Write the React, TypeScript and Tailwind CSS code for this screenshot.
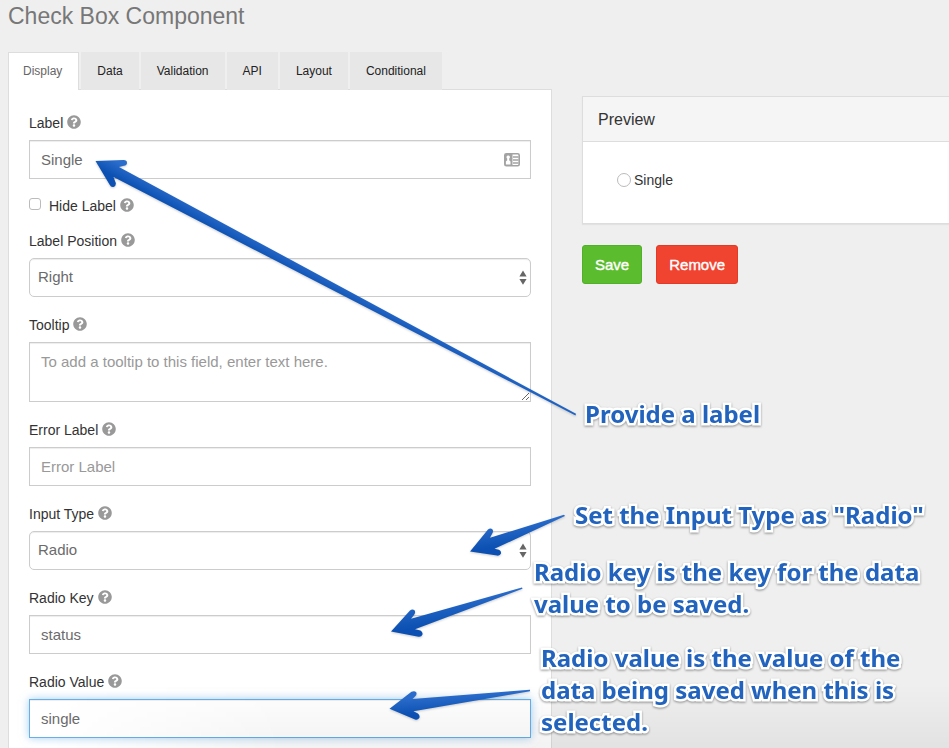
import type { ReactNode } from 'react';
import { FaQuestionCircle } from 'react-icons/fa';

const tabs = ['Display', 'Data', 'Validation', 'API', 'Layout', 'Conditional'];

const control =
  'block w-full border border-[#ccc] bg-white text-[15px] text-[#6b6b6b] shadow-[inset_0_1px_1px_rgba(0,0,0,0.075)] outline-none placeholder:text-[#999]';

function Help() {
  return <FaQuestionCircle className="mb-0.5 size-3.5 text-[#999]" aria-hidden="true" />;
}

function Field({ id, label, children }: { id: string; label: string; children: ReactNode }) {
  return (
    <div className="mb-4">
      <label htmlFor={id} className="mb-[5px] flex items-center gap-1 text-sm leading-6 text-[#333]">
        {label}
        <Help />
      </label>
      {children}
    </div>
  );
}

function SelectBox({ id, options }: { id: string; options: string[] }) {
  return (
    <div className="relative">
      <select id={id} className={`${control} h-[39px] appearance-none rounded-[5px] pr-6 pl-2`}>
        {options.map((o) => (
          <option key={o}>{o}</option>
        ))}
      </select>
      <svg className="pointer-events-none absolute top-3 right-1 h-4 w-2" viewBox="0 0 8 16" fill="#666" aria-hidden="true">
        <path d="M4 .5 7.600 6.400H.4zM4 14.800.4 9h7.200z" />
      </svg>
    </div>
  );
}

function Note({ className, children }: { className: string; children: ReactNode }) {
  return (
    <p
      className={`absolute font-['Noto_Sans','Open_Sans',sans-serif] text-2xl leading-[32px] font-bold whitespace-nowrap text-[#2163bd] drop-shadow-[0_1px_1px_rgba(0,0,0,0.4)] [-webkit-text-stroke:5px_white] [paint-order:stroke_fill] ${className}`}
    >
      {children}
    </p>
  );
}

function Arrows() {
  return (
    <svg
      className="absolute top-0 left-0 h-[748px] w-[949px] drop-shadow-[0_1px_1px_rgba(0,0,0,0.2)]"
      viewBox="0 0 949 748"
      aria-hidden="true"
    >
      <defs>
        <linearGradient id="long" gradientUnits="userSpaceOnUse" x1="340" y1="282" x2="333" y2="295">
          <stop offset="0" stopColor="#2a6ccb" />
          <stop offset="1" stopColor="#0b50b2" />
        </linearGradient>
        <linearGradient id="short" x1="0.35" y1="0.2" x2="0.5" y2="0.75">
          <stop offset="0" stopColor="#2a6ccb" />
          <stop offset="1" stopColor="#0b50b2" />
        </linearGradient>
      </defs>
      <path
        fill="url(#long)"
        d="M95.5 161 123.500 160Q127 160 127 162.800 127 165.500 124 165.800L119 167 576 413.800 575.500 415.500 113.500 177 115.800 183Q116.200 186 113.500 187 111 187.500 109.500 184.500Z"
      />
      <path
        fill="url(#short)"
        d="M470 551.500 488 529.500Q490.500 527.500 492.500 529.500 493.800 531.500 492 534L490 537.800 564 514.800 565 516 494.500 548.800 499 549.800Q501.500 551 501 553.500 500 556 497 555.600Z"
      />
      <path
        fill="url(#short)"
        d="M391 631.500 410 610.500Q412.500 608.500 414.500 610.300 416 612.500 414 615L411 618.800 522 587.500 522.500 588.700 415 629.200 420.500 630.500Q423 632 422.500 634.500 421.500 637.200 418.500 636.800Z"
      />
      <path
        fill="url(#short)"
        d="M389.500 708.800 411.500 691.800Q414.500 690.300 416.200 692.300 417.300 694.500 415 696.500L412.500 699 530 689.800 530 691.300 413.500 711.200 418 713.500Q420.300 715.500 419.300 718 417.500 720.500 415 719.500Z"
      />
    </svg>
  );
}

export default function App() {
  return (
    <main className="relative h-screen overflow-hidden bg-[#efefef] pl-2 font-['Liberation_Sans',Arial,sans-serif]">
      <h1 className="mb-5 text-[23px] leading-8 text-[#777]">Check Box Component</h1>

      <div className="grid grid-cols-[544fr_367fr] gap-[30px]">
        <section>
          <div role="tablist" className="relative -mb-px flex items-start gap-0.5">
            {tabs.map((tab, i) => (
              <button
                key={tab}
                role="tab"
                aria-selected={i === 0}
                className={`h-[38px] text-xs ${
                  i === 0
                    ? 'border border-b-0 border-[#ddd] bg-white pr-4 pb-0.5 pl-3.5 text-[#666]'
                    : 'bg-[#e7e7e7] px-4 text-[#222]'
                }`}
              >
                {tab}
              </button>
            ))}
          </div>

          <form className="border border-[#ddd] bg-white px-5 pt-[21px] pb-10">
            <Field id="label" label="Label">
              <div className="relative">
                <input id="label" defaultValue="Single" className={`${control} h-[39px] px-[11px]`} />
                <svg className="absolute top-3 right-[11px] h-4 w-4" viewBox="0 0 16 16" aria-hidden="true">
                  <rect x="0.800" y="1.800" width="14.400" height="12" rx="1.500" fill="#fff" stroke="#a3a3a3" strokeWidth="1.600" />
                  <rect x="7" y="2" width="1.500" height="12" fill="#a3a3a3" />
                  <path d="M9 5h5.500M9 8h5.500M9 11h5.500" stroke="#a3a3a3" strokeWidth="1.300" />
                  <path d="M1 2h6v12H1z" fill="#a3a3a3" />
                  <path d="M4.200 3.500a1.600 1.600 0 0 1 1 2.900v1.800l1.300 1.300v3H1.900v-3l1.300-1.300V6.400a1.600 1.600 0 0 1 1-2.900z" fill="#fff" />
                </svg>
              </div>
            </Field>

            <div className="mb-3 flex items-center gap-2 text-sm leading-[22px] text-[#333]">
              <input
                id="hide"
                type="checkbox"
                className="mb-1 size-3 appearance-none rounded-[3px] border border-[#bbb] bg-white"
              />
              <label htmlFor="hide" className="flex items-center gap-1">
                Hide Label
                <Help />
              </label>
            </div>

            <Field id="position" label="Label Position">
              <SelectBox id="position" options={['Right', 'Left', 'Top', 'Bottom']} />
            </Field>
            <Field id="tooltip" label="Tooltip">
              <textarea
                id="tooltip"
                placeholder="To add a tooltip to this field, enter text here."
                className={`${control} h-[60px] px-[11px] py-2`}
              />
            </Field>
            <Field id="error" label="Error Label">
              <input id="error" placeholder="Error Label" className={`${control} h-[39px] px-[11px]`} />
            </Field>
            <Field id="type" label="Input Type">
              <SelectBox id="type" options={['Radio', 'Checkbox']} />
            </Field>
            <Field id="key" label="Radio Key">
              <input id="key" defaultValue="status" className={`${control} h-[39px] px-[11px]`} />
            </Field>
            <Field id="value" label="Radio Value">
              <input
                id="value"
                defaultValue="single"
                className="block h-[39px] w-full border border-[#66afe9] bg-white px-[11px] text-[15px] text-[#6b6b6b] shadow-[inset_0_1px_1px_rgba(0,0,0,0.075),0_0_8px_rgba(102,175,233,0.6)] outline-none"
              />
            </Field>
          </form>
        </section>

        <aside className="pt-11">
          <div className="border border-r-0 border-[#ddd] bg-white shadow-[0_1px_1px_rgba(0,0,0,0.05)]">
            <h2 className="border-b border-[#ddd] bg-[#f5f5f5] px-[15px] pt-0.5 text-base leading-[42px] text-[#333]">Preview</h2>
            <div className="flex h-[81px] items-start px-[34px] pt-7">
              <label className="flex items-center gap-[3px] text-sm leading-5 text-[#333]">
                <input
                  type="radio"
                  name="preview"
                  className="size-3.5 appearance-none rounded-full border border-[#bbb] bg-white"
                />
                Single
              </label>
            </div>
          </div>
          <div className="mt-[21px] flex gap-3.5">
            <button className="h-[39px] rounded-[3px] border border-[#52af2a] bg-[#5bbd2e] px-3 pt-0.5 text-[15px] text-white [-webkit-text-stroke:0.4px_white]">
              Save
            </button>
            <button className="h-[39px] rounded-[3px] border border-[#e23a27] bg-[#f04330] px-3 pt-0.5 text-[15px] text-white [-webkit-text-stroke:0.4px_white]">
              Remove
            </button>
          </div>
        </aside>
      </div>

      <div className="pointer-events-none absolute inset-x-0 bottom-0 h-16 bg-linear-to-b from-transparent to-black/5 [mask-image:linear-gradient(to_right,transparent_5%,black_30%)]" />

      <div className="pointer-events-none absolute inset-0">
        <Arrows />
        <Note className="top-[398px] left-[585px]">Provide a label</Note>
        <Note className="top-[499px] left-[575px]">Set the Input Type as "Radio"</Note>
        <Note className="top-[556px] left-[534px]">
          Radio key is the key for the data
          <br />
          value to be saved.
        </Note>
        <Note className="top-[642px] left-[541px]">
          Radio value is the value of the
          <br />
          data being saved when this is
          <br />
          selected.
        </Note>
      </div>
    </main>
  );
}
